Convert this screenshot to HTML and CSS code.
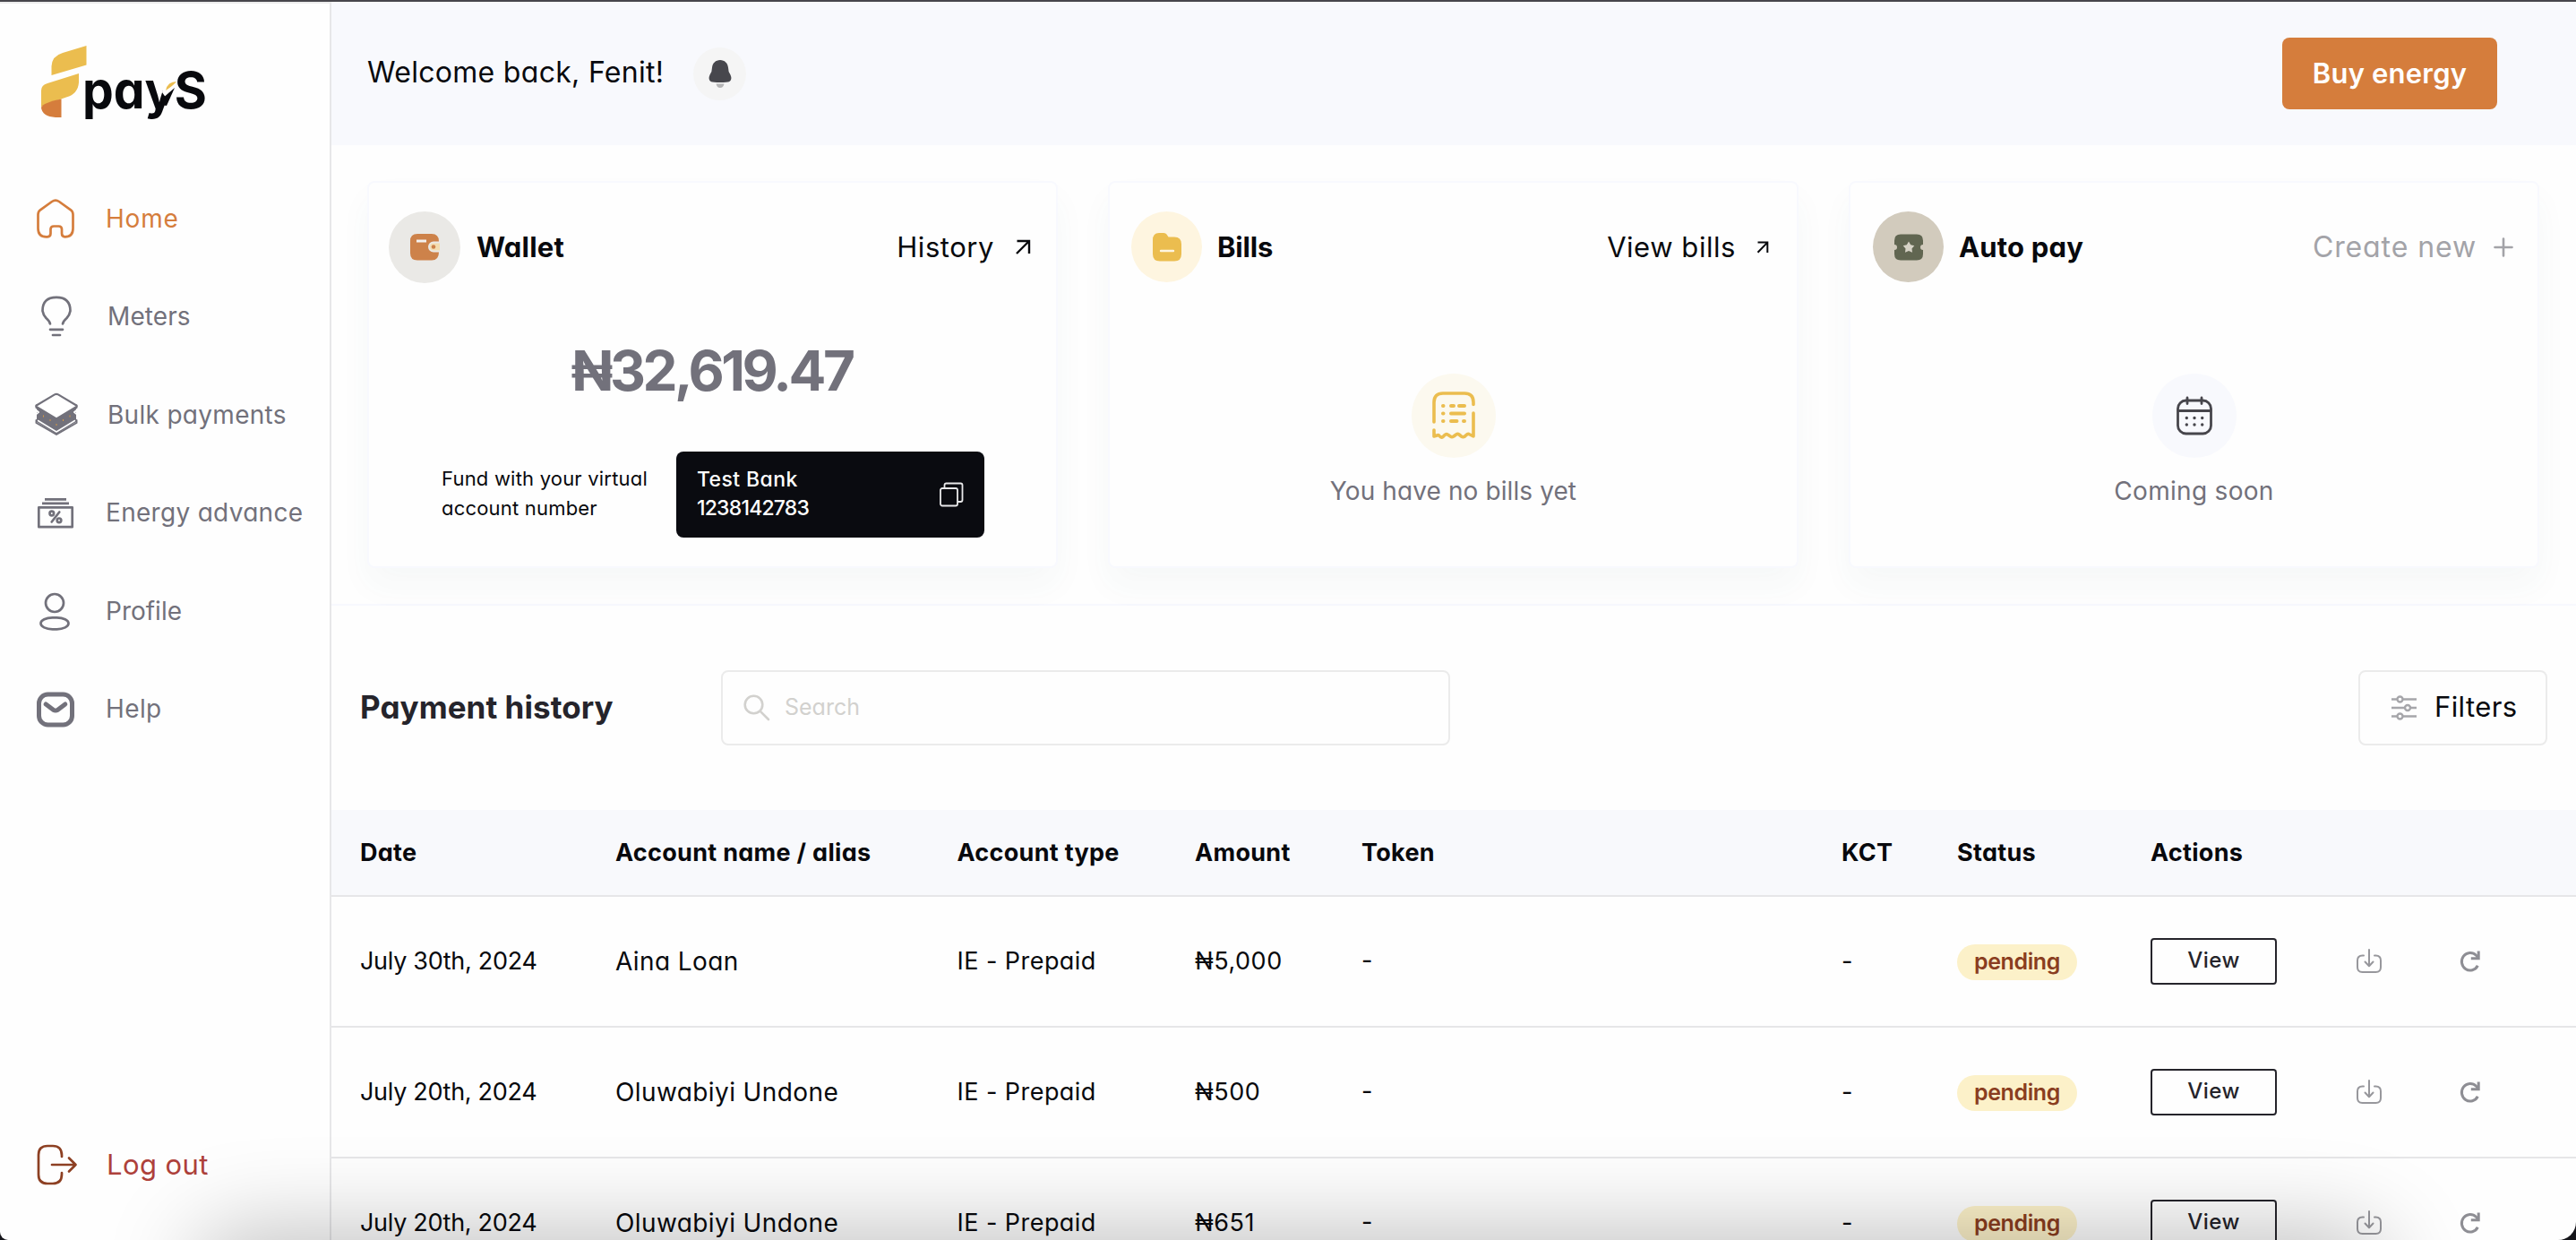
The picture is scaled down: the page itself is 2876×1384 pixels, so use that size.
FILE: index.html
```html
<!DOCTYPE html>
<html lang="en">
<head>
<meta charset="utf-8">
<title>FpayS – Home</title>
<link rel="stylesheet" href="styles.css">
</head>
<body>
<svg class="sprite" aria-hidden="true">
  <symbol id="download" viewBox="0 0 30 30"><g fill="none" stroke="#97979c" stroke-width="2" stroke-linecap="round" stroke-linejoin="round"><path d="M9 8.5H7.5Q2 8.500 2 14V21.500Q2 27 7.500 27H22.500Q28 27 28 21.500V14Q28 8.500 22.500 8.500H21"/><path d="M15 2V20M10.500 15.500L15 20.200L19.500 15.500"/></g></symbol>
  <symbol id="retry" viewBox="0 0 24 26"><g fill="none" stroke="#8e8e94" stroke-width="3"><path d="M20.300 17.800A9.500 9.800 0 1 1 18.500 6.200L20.500 8.800"/><path d="M21.200 1.500V9.700H12.800"/></g></symbol>
</svg>
<div class="app">
  <aside class="sidebar">
    <svg class="logo" width="190" height="84" viewBox="0 0 190 84" aria-label="FpayS">
      <path fill="#ebbd4f" d="M50.500 0V21.500L11.500 33V23Q12 11.500 24 8Z"/>
      <path fill="#ebbd4f" d="M42 31V41Q41 54 28 57.500L4 66Q.500 67 0 69V50Q0 44 7 42Z"/>
      <path fill="#d57d3c" d="M0 69Q2 63.500 22.500 59.500V80H16Q1 79 0 69Z"/>
      <text x="46" y="69.500" textLength="139" lengthAdjust="spacingAndGlyphs">payS</text>
      <path fill="#fff" d="M138 38H152L149 46L138.500 57L135 52Z"/>
      <path fill="#08090d" d="M149 47L137.500 57L134 66L140 67Z"/>
      <path fill="#ebbd4f" d="M139 50Q141 40 151 40Q148 44 139 50Z"/>
    </svg>
    <nav class="nav">
      <a class="nav-item active"><svg class="ico" viewBox="0 0 50 50"><path d="M20 6Q24 3.200 28 6L41 15.300Q43.500 17.200 43.500 20.500V36Q43.500 45.300 34.500 45.300Q31 45.300 31 41.500V37Q31 33.500 27.500 33.500H22Q18.500 33.500 18.500 37V41.500Q18.500 45.300 15 45.300H13.500Q4.500 45.300 4.500 36V20.500Q4.500 17.200 7 15.300Z"/></svg><span class="t-home">Home</span></a>
      <a class="nav-item"><svg class="ico" viewBox="0 0 50 50"><path d="M18 33.500Q17.500 30.500 13.500 27A15.300 15.300 0 0 1 9.500 19Q9.500 3.800 25 3.800T40.500 19A15.300 15.300 0 0 1 36.500 27Q32.500 30.500 32 33.500M18 39.800H32M21 46H29"/></svg><span class="t-meters">Meters</span></a>
      <a class="nav-item"><svg class="ico" viewBox="0 0 50 50"><path d="M3 15L25 28.500L47 15V33L25 46.500L3 33Z" class="solid" stroke="none"/><path d="M2.500 20L5 22L2.500 24M47.500 20L45 22L47.500 24" stroke="#fff" stroke-width="2"/><path d="M4.500 31.500L25 44L45.500 31.500" stroke="#fff" stroke-width="1.500"/><path d="M2.500 14.500V17L25 31L47.500 17V14.500" stroke-width="2"/><path d="M2.500 31V34L25 47L47.500 34V31" stroke-width="2"/><path d="M23 2.400Q25 1.300 27 2.400L47.300 14.500Q48 15.500 47 16.300L25 29.500L3 16.300Q2 15.500 2.700 14.500Z" fill="#fff" stroke-width="2.200"/><path d="M10 26.500h1M17.500 31h1M24.500 36h1M32 31h1M39.500 26.500h1" stroke="#d79a45" stroke-width="1.800" stroke-linecap="butt"/></svg><span class="t-bulk">Bulk payments</span></a>
      <a class="nav-item"><svg class="ico" viewBox="0 0 50 50"><path stroke-linecap="butt" d="M12 10.300H36M9 14.900H39M5.300 19.300H42.700V41.200H5.300Z"/><circle cx="19.800" cy="26" r="2.300"/><circle cx="28" cy="33.800" r="2.300"/><path d="M28.300 24.500L19.700 35.500"/></svg><span class="t-energy">Energy advance</span></a>
      <a class="nav-item"><svg class="ico" viewBox="0 0 50 50"><circle cx="23" cy="16" r="10"/><rect x="7.500" y="32.300" width="31" height="13" rx="13" ry="6.500"/></svg><span class="t-profile">Profile</span></a>
      <a class="nav-item"><svg class="ico heavy" viewBox="0 0 50 50"><rect x="5.500" y="9" width="37" height="34" rx="10"/><path d="M13.200 20L21.500 26.300Q24 27.800 26.500 26.300L34.800 20"/></svg><span class="t-help">Help</span></a>
    </nav>
    <a class="nav-item logout"><svg class="ico" viewBox="0 0 50 50"><path d="M31 17V15.500Q31 5 21 5H15Q5 5 5 15V37Q5 47 15 47H21Q31 47 31 36.500V35M20 26H46.500M39 18.500L46.500 26L39 33.500"/></svg><span class="t-logout">Log out</span></a>
  </aside>

  <main class="main">
    <header class="topbar">
      <div class="greet">Welcome back, Fenit!</div>
      <div class="bell"><svg width="28" height="34" viewBox="0 0 28 34"><path fill="#47474d" d="M14 2C19 2 22.500 5.500 23 10.500Q23 15.500 25.500 18.500Q28 24 24 26.200Q22 27 14 27T4 26.200Q0 24 2.500 18.500Q5 15.500 5 10.500C5.500 5.500 9 2 14 2Z"/><path fill="#b5b5b6" d="M9.500 28.500H18.500Q17.500 33 14 33T9.500 28.500Z"/></svg></div>
      <button class="buy">Buy energy</button>
    </header>

    <section class="cards">
      <article class="card">
        <div class="card-head">
          <div class="badge wallet-badge"><svg width="34" height="32" viewBox="0 0 34 32"><path fill="#cd824a" d="M9 1H25Q33 1 33 9.500H27A6 6 0 0 0 27 21.500H33Q33 30.500 25 30.500H9Q1 30.500 1 22.500V9Q1 1 9 1Z"/><path fill="#f3f1ee" d="M8 7.500H19V10.500H8Z"/><path fill="#f3ddb0" d="M27 11.500H34V19.500H27A4 4 0 0 1 27 11.500Z"/><circle cx="27" cy="15.500" r="2.300" fill="#cd824a"/></svg></div>
          <h2 class="t-wallet">Wallet</h2>
          <a class="more t-history">History</a>
          <svg class="arrow" width="18" height="18" viewBox="0 0 18 18"><path d="M2.500 2H16V16M16 2L2 16" fill="none" stroke="#08090d" stroke-width="2.400"/></svg>
        </div>
        <div class="amount">₦32,619.47</div>
        <div class="fund">
          <div class="fund-note">Fund with your virtual<br>account number</div>
          <div class="bank">
            <div><div class="t-bank">Test Bank</div><div class="t-acct">1238142783</div></div>
            <svg width="28" height="28" viewBox="0 0 28 28" fill="none" stroke="#e9e9ea" stroke-width="1.800"><rect x="2" y="7" width="19" height="19.500" rx="2"/><path d="M6.500 7V3.500Q6.500 1.500 8.500 1.500H24.500Q26.500 1.500 26.500 3.500V20Q26.500 22 24.500 22H21"/></svg>
          </div>
        </div>
      </article>

      <article class="card">
        <div class="card-head second">
          <div class="badge bills-badge"><svg width="34" height="34" viewBox="0 0 34 34"><path fill="#ebbd4f" d="M8 1H13Q16 1 17.500 4L18.500 5.500H25Q33 5.500 33 13.500V24.500Q33 32.500 25 32.500H9Q1 32.500 1 24.500V9Q1 1 8 1Z"/><path d="M10 21H24" stroke="#fef5e0" stroke-width="2.400" stroke-linecap="round"/></svg></div>
          <h2 class="t-bills">Bills</h2>
          <a class="more t-viewbills">View bills</a>
          <svg class="arrow" width="14" height="14" viewBox="0 0 14 14"><path d="M1.500 1.600H12.300V13M12.300 1.600L1.500 12.800" fill="none" stroke="#08090d" stroke-width="2"/></svg>
        </div>
        <div class="empty">
          <div class="empty-ico receipt"><svg width="50" height="56" viewBox="0 0 50 56" fill="none" stroke="#ebbd4f" stroke-width="3.600" stroke-linecap="round" stroke-linejoin="round"><path d="M3 35V13Q3 3 13 3H37Q47 3 47 13V15.500M47 25V51L42 48.500Q40.500 48 39 49.500L37.500 51Q35.500 52.500 33.500 51L31 49Q29 47.500 27 49.500L25 51Q22.500 52.500 20.500 50.500L19 49.500Q17 47.500 15 49.500L13 51.500Q11 53 9 50.500Q8 49 6.500 50L3 51V44"/><path stroke-width="4" d="M13 17H13.500M22 17H25M31 17H37M13 25.500H13.500M22 25.500H37M13 34H13.500M22 34H28.500M36 34H37"/></svg></div>
          <p class="t-nobills">You have no bills yet</p>
        </div>
      </article>

      <article class="card">
        <div class="card-head third">
          <div class="badge auto-badge"><svg width="34" height="30" viewBox="0 0 34 30"><path fill="#616651" d="M8 .500H26Q33 .500 33 7.500V12A3 3 0 0 0 33 18V22.500Q33 29.500 26 29.500H8Q1 29.500 1 22.500V18A3 3 0 0 0 1 12V7.500Q1 .500 8 .500Z"/><path fill="#d6d2c6" d="M17 8.500L19.200 12.300L23.300 13.200L20.500 16.400L21 20.800L17 19L13 20.800L13.500 16.400L10.700 13.200L14.800 12.300Z"/></svg></div>
          <h2 class="t-auto">Auto pay</h2>
          <a class="more t-create">Create new</a>
          <svg class="arrow" width="22" height="22" viewBox="0 0 22 22"><path d="M1.500 11H20.500M11 1.500V20.500" stroke="#a3a3a8" stroke-width="2.600" stroke-linecap="round"/></svg>
        </div>
        <div class="empty">
          <div class="empty-ico soon"><svg width="42" height="46" viewBox="0 0 42 46" fill="none" stroke="#47464c" stroke-width="2.800" stroke-linecap="round"><rect x="2.500" y="6" width="37" height="37" rx="9"/><path d="M13 3V9.500M29 3V9.500M3 17.500H39"/><path stroke-width="3.400" d="M12.300 25.500h.01M21 25.500h.01M29.700 25.500h.01M12.300 33h.01M21 33h.01M29.700 33h.01"/></svg></div>
          <p class="t-soon">Coming soon</p>
        </div>
      </article>
    </section>

    <section class="history">
      <div class="tools">
        <h1>Payment history</h1>
        <div class="search"><svg width="30" height="30" viewBox="0 0 30 30" fill="none" stroke="#d2d1ce" stroke-width="2.600" stroke-linecap="round"><circle cx="11.500" cy="11.500" r="9.800"/><path d="M18.800 18.800L28 28"/></svg><span>Search</span></div>
        <button class="filters"><svg width="30" height="28" viewBox="0 0 30 28" fill="#fff" stroke="#a6a6aa" stroke-width="2.400"><path d="M1 4.500H29M1 14H29M1 23.500H29"/><circle cx="10.500" cy="4.500" r="3"/><circle cx="19" cy="14" r="3"/><circle cx="10.500" cy="23.500" r="3"/></svg><span>Filters</span></button>
      </div>
      <div class="row head"><span>Date</span><span>Account name / alias</span><span>Account type</span><span>Amount</span><span>Token</span><span>KCT</span><span>Status</span><span>Actions</span></div>
      <div class="row"><span class="date">July 30th, 2024</span><span class="name">Aina Loan</span><span class="type">IE - Prepaid</span><span class="amt">₦5,000</span><span class="tok">-</span><span>-</span><span class="cell"><span class="pill">pending</span></span><span class="cell"><button class="view">View</button></span><span class="cell"><svg class="dl"><use href="#download"/></svg></span><span class="cell"><svg class="re"><use href="#retry"/></svg></span></div>
      <div class="row"><span class="date">July 20th, 2024</span><span class="name">Oluwabiyi Undone</span><span class="type">IE - Prepaid</span><span class="amt">₦500</span><span class="tok">-</span><span>-</span><span class="cell"><span class="pill">pending</span></span><span class="cell"><button class="view">View</button></span><span class="cell"><svg class="dl"><use href="#download"/></svg></span><span class="cell"><svg class="re"><use href="#retry"/></svg></span></div>
      <div class="row"><span class="date">July 20th, 2024</span><span class="name">Oluwabiyi Undone</span><span class="type">IE - Prepaid</span><span class="amt">₦651</span><span class="tok">-</span><span>-</span><span class="cell"><span class="pill">pending</span></span><span class="cell"><button class="view">View</button></span><span class="cell"><svg class="dl"><use href="#download"/></svg></span><span class="cell"><svg class="re"><use href="#retry"/></svg></span></div>
    </section>
  </main>
</div>
<div class="dock-shade"></div>
<div class="window-edge"></div>
</body>
</html>
```
FILE: styles.css
```css
* { box-sizing: border-box; }
html, body { margin: 0; height: 100%; overflow: hidden; }
body {
  font-family: Inter, "Liberation Sans", sans-serif;
  font-feature-settings: "cv11";
  font-size: 27px;
  color: #08090d;
  background: #fefefe;
}
h1, h2, p { margin: 0; }
button { font: inherit; font-feature-settings: inherit; color: inherit; padding: 0; background: none; }
svg { display: block; flex: none; }
.sprite { position: absolute; width: 0; height: 0; }

.app { display: flex; height: 100vh; border-top: 2px solid #47464c; overflow: hidden; }

/* sidebar */
.sidebar {
  flex: none; width: 370px; display: flex; flex-direction: column;
  padding: 47px 0 30px 38px;
  border-right: 2px solid #e7e7e9; border-top: 2px solid #ececec;
}
.logo { margin-left: 8px; }
.logo text { font: 700 57px Inter, sans-serif; font-feature-settings: "cv11"; fill: #08090d; }
.nav { margin-top: 54px; }
.nav-item { display: flex; align-items: center; gap: 30px; height: 109.5px; font-size: 28px; color: #72717b; white-space: nowrap; }
.ico { width: 50px; height: 50px; fill: none; stroke: #72717b; stroke-width: 2.7; stroke-linecap: round; stroke-linejoin: round; }
.ico .solid { fill: #72717b; }
.heavy { stroke-width: 5; }
.active { color: #d57d3c; }
.active .ico { stroke: #d57d3c; }
.logout { margin-top: auto; color: #ae413b; font-size: 31px; }
.logout .ico { stroke: #8d4023; }
.t-home { letter-spacing: .8px; }
.t-meters { letter-spacing: .1px; padding-left: 2px; }
.t-bulk { letter-spacing: .3px; padding-left: 2px; }
.t-energy { letter-spacing: .3px; }
.t-help { letter-spacing: .4px; }
.t-logout { letter-spacing: .4px; padding-left: 1px; }

/* main */
.main { flex: 1; min-width: 0; }
.topbar { display: flex; align-items: center; height: 160px; padding: 0 88px 0 40px; background: #f8f9fd; }
.greet { font-size: 32px; letter-spacing: .3px; width: 364px; white-space: nowrap; padding-bottom: 3px; }
.bell { width: 59px; height: 59px; border-radius: 50%; background: #f5f5f5; display: flex; align-items: center; justify-content: center; }
.buy {
  margin-left: auto; width: 240px; height: 80px; border: 0; border-radius: 8px;
  background: #d57d3c; color: #fff; font-size: 31px; font-weight: 600; letter-spacing: .2px; padding-bottom: 2px;
}

.cards {
  display: grid; grid-template-columns: repeat(3, 771px); gap: 56px;
  height: 514px; padding: 40px 0 0 40px; border-bottom: 2px solid #f7f8fe;
}
.card {
  height: 432px; border: 2px solid #f8f9fe; border-radius: 8px; background: #fefefe;
  box-shadow: 0 20px 36px rgba(60, 110, 90, .04);
}
.card-head { display: flex; align-items: center; height: 80px; margin-top: 32px; padding: 0 28px 0 22px; font-size: 31px; }
.card-head.second { padding: 0 31px 0 24px; height: 79px; }
.card-head.third { padding: 0 27px 0 25px; height: 79px; }
.badge { width: 80px; height: 80px; border-radius: 50%; display: flex; align-items: center; justify-content: center; }
.second .badge, .third .badge { width: 79px; height: 79px; }
.wallet-badge { background: #eae9e6; }
.bills-badge { background: #fef5e0; }
.auto-badge { background: #d2cbbd; }
h2 { font-size: 31px; font-weight: 700; margin-left: 17px; white-space: nowrap; padding-bottom: 1px; }
.t-wallet { letter-spacing: .2px; margin-left: 18px; }
.t-bills { letter-spacing: -.2px; }
.t-auto { letter-spacing: .2px; }
.more { margin-left: auto; white-space: nowrap; padding-bottom: 1px; }
.arrow { margin-left: 23px; }
.t-history { letter-spacing: .55px; }
.t-viewbills { letter-spacing: .55px; }
.t-create { font-size: 32px; letter-spacing: .9px; color: #a3a3a8; }
.third .arrow { margin-left: 19px; }

.amount { margin-top: 57px; height: 80px; line-height: 81px; text-align: center; color: #72717b; font-size: 62px; font-weight: 700; letter-spacing: -3.5px; padding-right: 2px; }
.fund { display: flex; align-items: center; margin-top: 51px; padding-left: 81px; }
.fund-note { width: 262px; font-size: 22px; line-height: 33px; letter-spacing: .2px; padding-bottom: 3px; white-space: nowrap; }
.bank {
  width: 344px; height: 96px; border-radius: 8px; background: #0a0b10; color: #fff;
  display: flex; align-items: center; justify-content: space-between; padding: 0 23px 0 23px;
  font-size: 23px; font-weight: 500; line-height: 32px;
}
.bank > div { padding-bottom: 3px; }
.t-bank { letter-spacing: .4px; }
.t-acct { letter-spacing: -.8px; }

.empty { display: flex; flex-direction: column; align-items: center; margin-top: 102px; color: #72717b; font-size: 28px; }
.empty-ico { width: 94px; height: 94px; border-radius: 50%; display: flex; align-items: center; justify-content: center; }
.receipt { background: #fcf9ef; }
.soon { background: #f8f9fd; }
.empty p { margin-top: 17px; line-height: 40px; }
.t-nobills { letter-spacing: .1px; }
.t-soon { letter-spacing: .3px; }

/* payment history */
.tools { display: flex; align-items: center; height: 228px; padding: 0 32px 0 32px; }
h1 { width: 403px; font-size: 35px; font-weight: 700; letter-spacing: .05px; color: #25242b; white-space: nowrap; padding-bottom: 3px; }
.search {
  width: 814px; height: 84px; border: 2px solid #ebebeb; border-radius: 8px;
  display: flex; align-items: center; gap: 16px; padding-left: 23px; font-size: 25px; color: #d2d1ce;
}
.search span { padding-bottom: 2px; }
.filters {
  margin-left: auto; width: 211px; height: 84px; border: 2px solid #ebebeb; border-radius: 8px;
  display: flex; align-items: center; gap: 19px; padding-left: 34px; font-size: 31px; letter-spacing: .4px;
}
.filters span { padding-bottom: 3px; }
.row {
  display: grid; align-items: center; height: 146px; padding-left: 32px;
  grid-template-columns: 285px 381.5px 265.5px 186px 536px 129px 216px 229px 115px 1fr;
  border-bottom: 2px solid #e6e6e8; white-space: nowrap;
}
.row > span { padding-bottom: 1px; }
.row.head { height: 97px; background: #f8f9fc; font-weight: 700; letter-spacing: .3px; }
.date { letter-spacing: -.3px; }
.name { font-size: 28px; letter-spacing: .4px; }
.type { letter-spacing: .45px; }
.amt { letter-spacing: .5px; }
.row > .tok { padding-bottom: 4px; }
.row > .cell { display: flex; padding-bottom: 0; }
.pill {
  width: 134px; height: 40px; line-height: 38px; border-radius: 20px; margin-top: 2px; text-align: center;
  background: #fcf1c9; color: #8a3d20; font-size: 25px; font-weight: 600; letter-spacing: -.4px;
}
.view { width: 141px; height: 52px; border: 2px solid #25242b; border-radius: 4px; color: #25242b; font-size: 24px; font-weight: 500; letter-spacing: .5px; line-height: 44px; padding-bottom: 3px; }
.dl { width: 30px; height: 30px; }
.re { width: 24px; height: 26px; margin-left: 1px; }

/* shade cast over the lower edge of the window, and its rounded corners */
.dock-shade {
  position: fixed; left: 240px; right: 235px; bottom: -74px; height: 60px; border-radius: 30px;
  box-shadow: 0 0 100px 24px rgba(0, 0, 0, .25); pointer-events: none;
}
.window-edge {
  position: fixed; inset: 0; border-radius: 0 0 20px 9px; pointer-events: none;
  box-shadow: 0 0 0 30px #15151a;
}
```
